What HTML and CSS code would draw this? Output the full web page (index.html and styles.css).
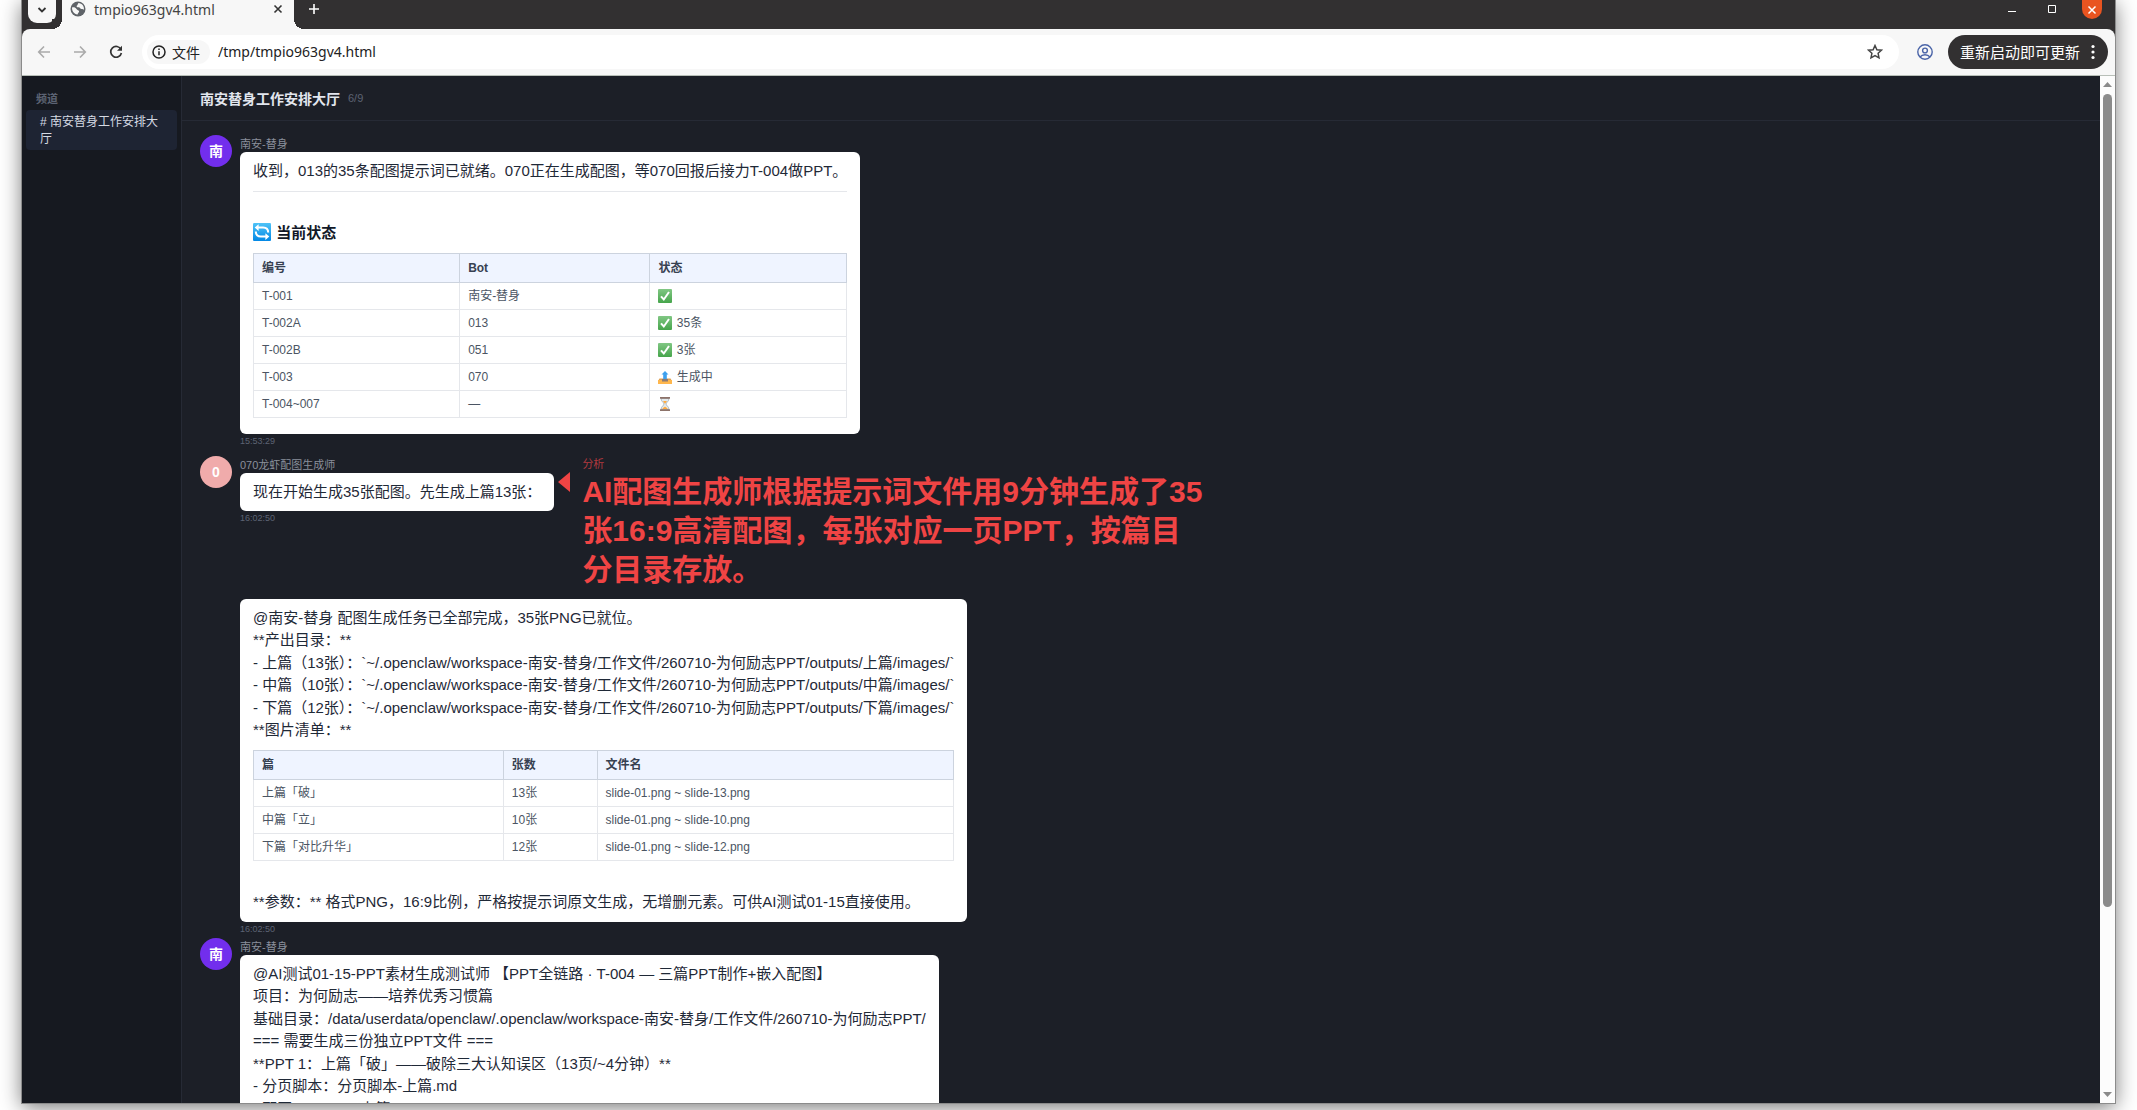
FILE: index.html
```html
<!DOCTYPE html>
<html lang="zh-CN">
<head>
    <meta charset="UTF-8">
    <meta name="viewport" content="width=device-width, initial-scale=1.0">
    <title>tmpio963gv4.html</title>
    <link rel="stylesheet" href="styles.css">
</head>
<body>
    <!-- Shared emoji drawings -->
    <svg class="symbols" width="0" height="0" aria-hidden="true">
        <defs>
            <linearGradient id="blue" x1="0" y1="0" x2="0" y2="1"><stop offset="0" stop-color="#4fc3f7"/><stop offset="1" stop-color="#0288e5"/></linearGradient>
            <linearGradient id="green" x1="0" y1="0" x2="0" y2="1"><stop offset="0" stop-color="#81c784"/><stop offset="1" stop-color="#46a54b"/></linearGradient>
        </defs>
        <symbol id="sync" viewBox="0 0 16 16">
            <rect width="16" height="16" rx="1" fill="url(#blue)"/>
            <path d="M5 1v6L1.500 4zM11 9v6l3.500-3z" fill="#fff"/>
            <path d="M4.500 4H9c3 0 4.500 1.500 4.500 4.500M11.500 12H7c-3 0-4.500-1.500-4.500-4.500" fill="none" stroke="#fff" stroke-width="1.800"/>
        </symbol>
        <symbol id="check" viewBox="0 0 14 14">
            <rect width="14" height="14" rx="1" fill="url(#green)"/>
            <path d="M3 7.300l2.800 3.200L11 3" fill="none" stroke="#fff" stroke-width="2"/>
        </symbol>
        <symbol id="outbox" viewBox="0 0 14 14">
            <path d="M1.500 8.500h11L14 11H0z" fill="#e0a050"/>
            <path d="M0 10h14v4H0z" fill="#ffb74d"/>
            <path d="M4 9h6v2.500H4z" fill="#8d7b75"/>
            <path d="M7 1l3.500 3.500H8.800V9H5.200V4.500H3.500z" fill="#3da0ee"/>
        </symbol>
        <symbol id="hourglass" viewBox="0 0 14 14">
            <path d="M3 1.500h8c0 3-3 4-3 5.500s3 2.500 3 5.500H3C3 9.500 6 8.500 6 7S3 4.500 3 1.500z" fill="#e3e9ec" stroke="#a3afb5" stroke-width=".8"/>
            <path d="M5 4h4L7.300 6.500h-.6zM4.300 12C5 10.500 6.500 10.500 7 9.500c.5 1 2 1 2.700 2.500z" fill="#ffab40"/>
            <path d="M2 0h10v1.700H2zM2 12.300h10V14H2z" fill="#8d736a"/>
        </symbol>
    </svg>

    <div class="window">
        <div class="title-bar">
            <button class="tab-search" aria-label="搜索标签页">
                <svg width="10" height="10" viewBox="0 0 10 10"><path d="M1.500 3L5 6.500 8.500 3" fill="none" stroke="#333" stroke-width="1.800"/></svg>
            </button>
            <div class="tab">
                <svg width="16" height="16" viewBox="0 0 16 16"><circle cx="8" cy="8" r="7.500" fill="#5f6368"/><path d="M2 6.500c2-.5 3.500 0 4.500 1.500s2 1 2.500 2-1 1.500-1.500 3.500C4 13 2 10.500 2 6.500zM8.500 2c-1 1-.5 1.800-1.500 2.500s0 2 1.500 1.800 1.500 1.700 3 1.700 1.500.5 2.500.5C14.200 5 12 2.300 8.500 2z" fill="#f7f7f7"/></svg>
                <span class="tab-name">tmpio963gv4.html</span>
                <button class="tab-close" aria-label="关闭标签页">
                    <svg width="10" height="10" viewBox="0 0 10 10"><path d="M1.500 1.500l7 7m0-7l-7 7" stroke="#333" stroke-width="1.600"/></svg>
                </button>
            </div>
            <button class="new-tab" aria-label="新标签页">
                <svg width="12" height="12" viewBox="0 0 12 12"><path d="M6 1v10M1 6h10" stroke="#fff" stroke-width="1.600"/></svg>
            </button>
            <div class="window-buttons">
                <button aria-label="最小化"><svg width="10" height="10" viewBox="0 0 10 10"><path d="M1 7.500h8" stroke="#fff"/></svg></button>
                <button aria-label="最大化"><svg width="10" height="10" viewBox="0 0 10 10"><path d="M1.500 1.500h7v7h-7z" fill="none" stroke="#fff"/></svg></button>
                <button class="close" aria-label="关闭"><svg width="10" height="10" viewBox="0 0 10 10"><path d="M1.500 1.500l7 7m0-7l-7 7" stroke="#fff" stroke-width="1.500"/></svg></button>
            </div>
        </div>

        <div class="toolbar">
            <button class="nav-button" aria-label="后退"><svg width="14" height="14" viewBox="0 0 14 14"><path d="M13 7H2m5-5.500L1.700 7 7 12.500" fill="none" stroke="#aaa" stroke-width="1.600"/></svg></button>
            <button class="nav-button" aria-label="前进"><svg width="14" height="14" viewBox="0 0 14 14"><path d="M1 7h11M7 1.500L12.300 7 7 12.500" fill="none" stroke="#aaa" stroke-width="1.600"/></svg></button>
            <button class="nav-button" aria-label="重新加载"><svg width="14" height="14" viewBox="0 0 14 14"><path d="M12 4.500A5.400 5.400 0 1 0 12.400 8" fill="none" stroke="#333" stroke-width="1.700"/><path d="M13 .8v5H8z" fill="#333"/></svg></button>
            <div class="address">
                <button class="site-info">
                    <svg width="14" height="14" viewBox="0 0 14 14"><circle cx="7" cy="7" r="6" fill="none" stroke="#222" stroke-width="1.500"/><path d="M7 6.200v4M7 3.500v1.500" stroke="#222" stroke-width="1.500"/></svg>
                    文件
                </button>
                <input class="url" type="text" aria-label="地址" value="/tmp/tmpio963gv4.html">
                <button class="star" aria-label="收藏"><svg width="16" height="16" viewBox="0 0 16 16"><path d="M8 1.500l1.900 4.200 4.600.5-3.400 3.100.9 4.600-4-2.300-4 2.300.9-4.600L1.500 6.200l4.600-.5z" fill="none" stroke="#444" stroke-width="1.500"/></svg></button>
            </div>
            <button class="profile" aria-label="用户"><svg width="16" height="16" viewBox="0 0 16 16"><g fill="none" stroke="#4a64a8" stroke-width="1.400"><circle cx="8" cy="8" r="7.200"/><circle cx="8" cy="6.500" r="2.400"/><path d="M3 13c2.500-3 7.500-3 10 0"/></g></svg></button>
            <button class="update">重新启动即可更新
                <svg width="4" height="16" viewBox="0 0 4 16"><g fill="#fff"><circle cx="2" cy="2.500" r="1.600"/><circle cx="2" cy="8" r="1.600"/><circle cx="2" cy="13.500" r="1.600"/></g></svg>
            </button>
        </div>

        <div class="page">
            <nav class="sidebar">
                <h2>频道</h2>
                <a href="#" class="channel"># 南安替身工作安排大厅</a>
            </nav>

            <main class="chat">
                <header class="chat-header">
                    <h1>南安替身工作安排大厅</h1>
                    <span class="progress">6/9</span>
                </header>

                <div class="messages">
                    <div class="message">
                        <div class="avatar purple">南</div>
                        <div class="message-body">
                            <div class="sender">南安-替身</div>
                            <div class="bubble">
                                <p>收到，013的35条配图提示词已就绪。070正在生成配图，等070回报后接力T-004做PPT。</p>
                                <hr>
                                <br>
                                <h3><svg class="emoji large" role="img" aria-label="同步"><use href="#sync"/></svg> 当前状态</h3>
                                <table>
                                    <thead>
                                        <tr><th>编号</th><th>Bot</th><th>状态</th></tr>
                                    </thead>
                                    <tbody>
                                        <tr><td>T-001</td><td>南安-替身</td><td><svg class="emoji" role="img" aria-label="完成"><use href="#check"/></svg></td></tr>
                                        <tr><td>T-002A</td><td>013</td><td><svg class="emoji" role="img" aria-label="完成"><use href="#check"/></svg> 35条</td></tr>
                                        <tr><td>T-002B</td><td>051</td><td><svg class="emoji" role="img" aria-label="完成"><use href="#check"/></svg> 3张</td></tr>
                                        <tr><td>T-003</td><td>070</td><td><svg class="emoji" role="img" aria-label="输出"><use href="#outbox"/></svg> 生成中</td></tr>
                                        <tr><td>T-004~007</td><td>—</td><td><svg class="emoji" role="img" aria-label="等待"><use href="#hourglass"/></svg></td></tr>
                                    </tbody>
                                </table>
                            </div>
                            <div class="time">15:53:29</div>
                        </div>
                    </div>

                    <div class="message">
                        <div class="avatar pink">0</div>
                        <div class="message-body">
                            <div class="sender">070龙虾配图生成师</div>
                            <div class="bubble">
                                <p>现在开始生成35张配图。先生成上篇13张：</p>
                            </div>
                            <div class="time">16:02:50</div>
                        </div>
                        <aside class="note">
                            <div class="note-label">分析</div>
                            <p class="note-text">AI配图生成师根据提示词文件用9分钟生成了35张16:9高清配图，每张对应一页PPT，按篇目分目录存放。</p>
                        </aside>
                    </div>

                    <div class="message continued">
                        <div class="message-body">
                            <div class="bubble">
                                <p>@南安-替身 配图生成任务已全部完成，35张PNG已就位。</p>
                                <p>**产出目录：**</p>
                                <p>- 上篇（13张）：`~/.openclaw/workspace-南安-替身/工作文件/260710-为何励志PPT/outputs/上篇/images/`</p>
                                <p>- 中篇（10张）：`~/.openclaw/workspace-南安-替身/工作文件/260710-为何励志PPT/outputs/中篇/images/`</p>
                                <p>- 下篇（12张）：`~/.openclaw/workspace-南安-替身/工作文件/260710-为何励志PPT/outputs/下篇/images/`</p>
                                <p>**图片清单：**</p>
                                <table>
                                    <thead>
                                        <tr><th>篇</th><th>张数</th><th>文件名</th></tr>
                                    </thead>
                                    <tbody>
                                        <tr><td>上篇「破」</td><td>13张</td><td>slide-01.png ~ slide-13.png</td></tr>
                                        <tr><td>中篇「立」</td><td>10张</td><td>slide-01.png ~ slide-10.png</td></tr>
                                        <tr><td>下篇「对比升华」</td><td>12张</td><td>slide-01.png ~ slide-12.png</td></tr>
                                    </tbody>
                                </table>
                                <br>
                                <p>**参数：** 格式PNG，16:9比例，严格按提示词原文生成，无增删元素。可供AI测试01-15直接使用。</p>
                            </div>
                            <div class="time">16:02:50</div>
                        </div>
                    </div>

                    <div class="message">
                        <div class="avatar purple">南</div>
                        <div class="message-body">
                            <div class="sender">南安-替身</div>
                            <div class="bubble">
                                <p>@AI测试01-15-PPT素材生成测试师 【PPT全链路 · T-004 — 三篇PPT制作+嵌入配图】</p>
                                <p>项目：为何励志——培养优秀习惯篇</p>
                                <p>基础目录：/data/userdata/openclaw/.openclaw/workspace-南安-替身/工作文件/260710-为何励志PPT/</p>
                                <p>=== 需要生成三份独立PPT文件 ===</p>
                                <p>**PPT 1：上篇「破」——破除三大认知误区（13页/~4分钟）**</p>
                                <p>- 分页脚本：分页脚本-上篇.md</p>
                                <p>- 配图：outputs/上篇/images/</p>
                            </div>
                        </div>
                    </div>
                </div>
            </main>

            <div class="scrollbar">
                <svg width="9" height="5" viewBox="0 0 9 5"><path d="M0 5L4.500 0 9 5z" fill="#8a8a8a"/></svg>
                <div class="track"><div class="thumb"></div></div>
                <svg width="9" height="5" viewBox="0 0 9 5"><path d="M0 0h9L4.500 5z" fill="#8a8a8a"/></svg>
            </div>
        </div>
    </div>
</body>
</html>
```
FILE: styles.css
```css
* {
    margin: 0;
    padding: 0;
    box-sizing: border-box;
}

body {
    height: 100vh;
    overflow: hidden;
    display: flex;
    background: #fff;
    font-family: "Liberation Sans", "Noto Sans CJK SC", sans-serif;
}

button {
    border: none;
    background: none;
    font: inherit;
    display: flex;
    align-items: center;
    justify-content: center;
}

.symbols {
    position: absolute;
}

.emoji {
    width: 14px;
    height: 14px;
    margin-right: 1px;
    vertical-align: -3px;
}

.emoji.large {
    width: 18px;
    height: 18px;
}

/* Browser window */
.window {
    flex: 1;
    min-width: 0;
    margin: 0 22px 7px;
    display: flex;
    flex-direction: column;
    background: #323031;
    box-shadow: 0 0 0 1px #8b8b8b, 0 4px 20px rgba(0, 0, 0, 0.55);
    font-family: "Noto Sans", "Noto Sans CJK SC", sans-serif;
}

.title-bar {
    height: 29px;
    display: flex;
    align-items: flex-start;
}

.tab-search {
    width: 28px;
    height: 23px;
    margin: 0 6px;
    padding-bottom: 4px;
    background: #f7f7f7;
    border-radius: 0 0 9px 9px;
}

.tab {
    position: relative;
    width: 232px;
    height: 29px;
    padding: 0 11px 11px 8px;
    display: flex;
    align-items: center;
    gap: 8px;
    background: #f7f7f7;
    color: #444;
    font-size: 14px;
}

/* Curved feet on both sides of the active tab */
.tab::before,
.tab::after {
    content: "";
    position: absolute;
    bottom: 0;
    width: 10px;
    height: 10px;
}

.tab::before {
    right: 100%;
    background: radial-gradient(circle at 0 0, #323031 10px, #f7f7f7 10px);
}

.tab::after {
    left: 100%;
    background: radial-gradient(circle at 100% 0, #323031 10px, #f7f7f7 10px);
}

.tab-name {
    flex: 1;
}

.new-tab {
    margin-left: 14px;
    height: 18px;
}

.window-buttons {
    margin-left: auto;
    margin-right: 13px;
    display: flex;
    gap: 20px;
}

.window-buttons button {
    width: 20px;
    height: 18px;
}

.window-buttons .close {
    height: 19px;
    background: #e95420;
    border-radius: 0 0 10px 10px;
}

.toolbar {
    height: 47px;
    padding: 0 7px 1px 15px;
    display: flex;
    align-items: center;
    background: #f7f7f7;
    border-bottom: 1px solid #b8bfb8;
    border-radius: 8px 8px 0 0;
}

.nav-button {
    width: 14px;
    margin-right: 22px;
}

.address {
    flex: 1;
    height: 34px;
    margin-left: -3px;
    padding: 0 16px 0 5px;
    display: flex;
    align-items: center;
    background: #fff;
    border-radius: 17px;
}

.site-info {
    height: 24px;
    padding: 0 10px 0 5px;
    gap: 6px;
    background: #f7f7f7;
    border-radius: 12px;
    color: #222;
    font-size: 14px;
}

.url {
    flex: 1;
    margin-left: 8px;
    border: none;
    background: none;
    outline: none;
    color: #222;
    font: inherit;
    font-size: 14px;
}

.profile {
    margin: 0 15px 0 18px;
}

.update {
    height: 34px;
    padding: 0 13px 0 12px;
    gap: 11px;
    background: #323031;
    border-radius: 17px;
    color: #fff;
    font-size: 15px;
}

/* Chat page */
.page {
    flex: 1;
    min-height: 0;
    display: flex;
    background: #1c1f27;
    font-family: "Liberation Sans", "Noto Sans CJK SC", sans-serif;
}

.sidebar {
    width: 160px;
    padding: 15px 4px;
    background: #161920;
    border-right: 1px solid #262a35;
}

.sidebar h2 {
    padding: 0 10px 3px;
    color: #5c6373;
    font-size: 11px;
    line-height: 16px;
}

.channel {
    display: block;
    padding: 4px 14px 2px;
    background: #1e2433;
    border-radius: 4px;
    color: #d5dae3;
    font-size: 12px;
    line-height: 17px;
    text-decoration: none;
}

.chat {
    flex: 1;
    min-width: 0;
    display: flex;
    flex-direction: column;
}

.chat-header {
    height: 45px;
    padding: 0 18px;
    display: flex;
    align-items: center;
    gap: 8px;
    border-bottom: 1px solid #262a35;
}

.chat-header h1 {
    color: #e2e6ee;
    font-size: 14px;
}

.progress {
    color: #5c6373;
    font-size: 11px;
}

.messages {
    flex: 1;
    min-height: 0;
    padding: 14px 18px 0;
    overflow: hidden;
}

.message {
    display: flex;
    align-items: flex-start;
    margin-bottom: 9px;
}

.message.continued {
    padding-left: 40px;
    margin-bottom: 3px;
}

.avatar {
    width: 32px;
    height: 32px;
    margin-right: 8px;
    border-radius: 50%;
    color: #fff;
    font-size: 14px;
    font-weight: bold;
    line-height: 32px;
    text-align: center;
}

.purple {
    background: #722eed;
}

.pink {
    background: #f0abab;
}

.sender {
    padding-top: 1px;
    color: #8a8f9b;
    font-size: 11px;
    line-height: 16px;
}

.bubble {
    width: fit-content;
    padding: 8px 13px;
    background: #fff;
    border-radius: 6px;
    color: #1f2937;
    font-size: 15px;
    line-height: 1.5;
}

.bubble hr {
    margin: 8px 0;
    border: none;
    border-top: 1px solid #e5e7eb;
}

.bubble h3 {
    color: #111827;
    font-size: 15px;
}

.bubble table {
    width: 100%;
    margin: 8px 0;
    border-collapse: collapse;
    font-size: 12px;
}

.bubble th,
.bubble td {
    padding: 4px 8px;
    border: 1px solid #e5e7eb;
    color: #4b5563;
    text-align: left;
}

.bubble th {
    padding: 5px 8px;
    background: #eff4ff;
    border-color: #ccd3de;
    color: #374151;
}

.time {
    margin-top: 1px;
    color: #5c6373;
    font-size: 9px;
    line-height: 12px;
}

/* Red analysis note beside a message */
.note {
    position: relative;
    max-width: 648px;
    margin-left: 4px;
    padding-left: 24px;
    color: #ef4444;
}

.note::before {
    content: "";
    position: absolute;
    left: 0;
    top: 16px;
    border: solid transparent;
    border-width: 10px 12px 10px 0;
    border-right-color: #ef4444;
}

.note-label {
    color: #b23a3f;
    font-size: 11px;
    line-height: 16px;
}

.note-text {
    margin-bottom: 1px;
    font-size: 30px;
    font-weight: bold;
    line-height: 39px;
}

/* Page scrollbar */
.scrollbar {
    width: 15px;
    padding: 6px 0;
    display: flex;
    flex-direction: column;
    align-items: center;
    gap: 7px;
    background: #fcfcfc;
}

.track {
    flex: 1;
    width: 9px;
}

.thumb {
    height: 82%;
    background: #8b8b8b;
    border-radius: 5px;
}
```
